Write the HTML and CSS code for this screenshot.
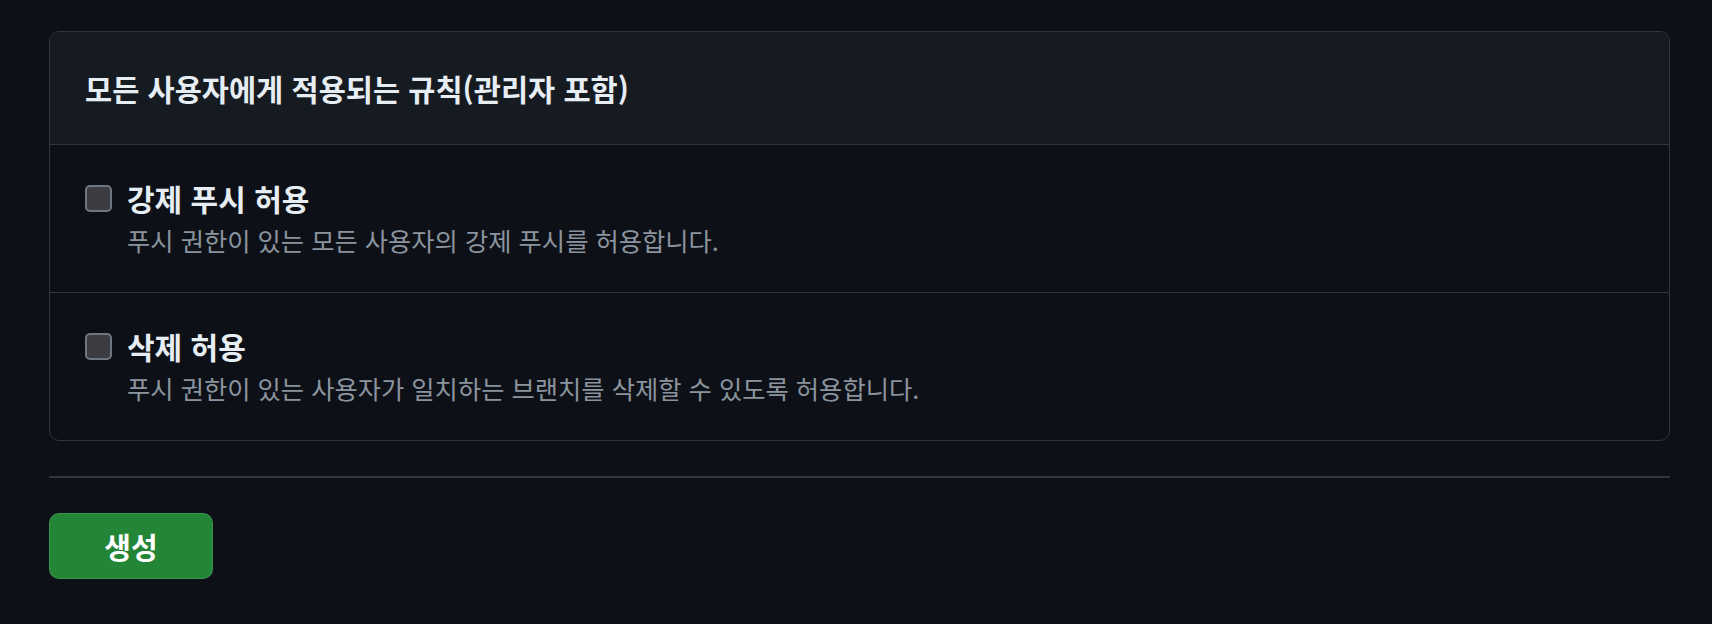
FILE: index.html
```html
<!DOCTYPE html>
<html lang="ko">
<head>
  <meta charset="UTF-8">
  <meta name="viewport" content="width=device-width, initial-scale=1.0">
  <link rel="stylesheet" href="styles.css">
  <title>브랜치 보호 규칙</title>
</head>
<body>

<div class="box">
  <div class="box-header">
    <h2>모든 사용자에게 적용되는 규칙(관리자 포함)</h2>
  </div>

  <div class="box-row">
    <label class="rule">
      <input type="checkbox" class="check">
      <span class="rule-text">
        <span class="rule-title">강제 푸시 허용</span>
        <span class="rule-desc">푸시 권한이 있는 모든 사용자의 강제 푸시를 허용합니다.</span>
      </span>
    </label>
  </div>

  <div class="box-row">
    <label class="rule">
      <input type="checkbox" class="check">
      <span class="rule-text">
        <span class="rule-title">삭제 허용</span>
        <span class="rule-desc">푸시 권한이 있는 사용자가 일치하는 브랜치를 삭제할 수 있도록 허용합니다.</span>
      </span>
    </label>
  </div>
</div>

<hr class="divider">

<button class="btn-create">생성</button>

</body>
</html>
```

FILE: styles.css
```css
html, body {
  height: 100%;
}

body {
  margin: 0;
  padding: 31px 42px 0 49px;
  background-color: #0d1117;
  color: #e6edf3;
  font-family: "Noto Sans CJK KR", "Noto Sans", sans-serif;
  box-sizing: border-box;
}

.box {
  border: 1px solid #30363d;
  border-radius: 10px;
  overflow: hidden;
}

.box-header {
  background-color: #161b22;
  padding: 34px 35px;
  border-bottom: 1px solid #30363d;
}

.box-header h2 {
  margin: 0;
  font-size: 29.5px;
  line-height: 44px;
  font-weight: 700;
  color: #e6edf3;
}

.box-row {
  padding: 35px 35px 34px;
  border-bottom: 1px solid #30363d;
}

.box-row:last-child {
  border-bottom: none;
}

.rule {
  display: flex;
  align-items: flex-start;
  gap: 15px;
  cursor: pointer;
}

.check {
  appearance: none;
  -webkit-appearance: none;
  margin: 5px 0 0;
  width: 27px;
  height: 27px;
  flex: none;
  background-color: #3b3d40;
  border: 2px solid #6e7681;
  border-radius: 5px;
  box-sizing: border-box;
}

.rule-text {
  display: flex;
  flex-direction: column;
  gap: 6px;
}

.rule-title {
  font-size: 30px;
  line-height: 36px;
  font-weight: 700;
  color: #e6edf3;
}

.rule-desc {
  font-size: 25.3px;
  line-height: 36px;
  color: #8b949e;
}

.divider {
  margin: 35px 0 35px;
  border: none;
  border-top: 2px solid #30363d;
}

.btn-create {
  width: 164px;
  height: 66px;
  background-color: #238636;
  color: #fff;
  border: 1px solid rgba(240, 246, 252, 0.12);
  border-radius: 10px;
  font-family: inherit;
  font-size: 29px;
  font-weight: 700;
  cursor: pointer;
}

.btn-create:hover {
  background-color: #2ea043;
}
```
